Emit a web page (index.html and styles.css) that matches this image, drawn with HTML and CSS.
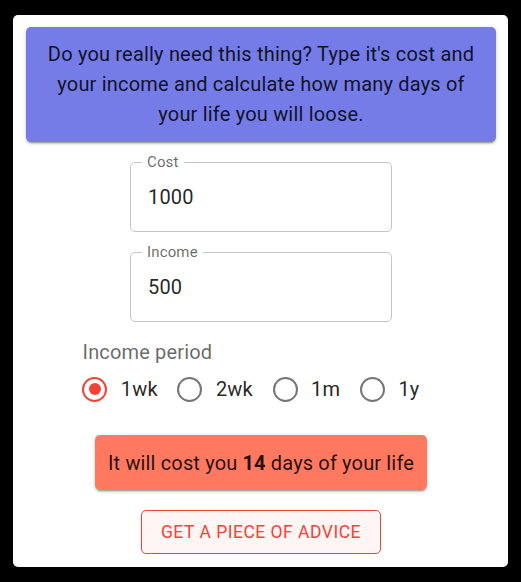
FILE: index.html
```html
<!DOCTYPE html>
<html lang="en">
<head>
<meta charset="utf-8">
<title>Days of life</title>
<link rel="stylesheet" href="styles.css">
</head>
<body>
<div class="card">
  <div class="banner">Do you really need this thing? Type it's cost and your income and calculate how many days of your life you will loose.</div>
  <fieldset class="field field-first">
    <legend class="field-label">Cost</legend>
    <input class="field-input" type="text" value="1000">
  </fieldset>
  <fieldset class="field field-second">
    <legend class="field-label">Income</legend>
    <input class="field-input" type="text" value="500">
  </fieldset>
  <div class="period">
    <div class="period-label">Income period</div>
    <div class="radios">
      <label class="option"><span class="radio-btn"><span class="radio radio-checked"><span class="radio-dot"></span></span></span><span class="option-text">1wk</span></label>
      <label class="option"><span class="radio-btn"><span class="radio"></span></span><span class="option-text">2wk</span></label>
      <label class="option"><span class="radio-btn"><span class="radio"></span></span><span class="option-text">1m</span></label>
      <label class="option"><span class="radio-btn"><span class="radio"></span></span><span class="option-text">1y</span></label>
    </div>
  </div>
  <div class="result">It will cost you <b>14</b> days of your life</div>
  <button class="advice" type="button">Get a piece of advice</button>
</div>
</body>
</html>
```
FILE: styles.css
```css
html, body {
  margin: 0;
  background: #000;
}
body {
  padding: 15px 13px 15px 13px;
  font-family: Roboto, "Noto Sans", Arial, sans-serif;
  color: rgba(0, 0, 0, 0.87);
  letter-spacing: 0.00938em;
}
.card {
  width: 495px;
  height: 552px;
  box-sizing: border-box;
  background: #fff;
  border-radius: 5px;
  padding: 12px 12px 13px 13px;
  display: flex;
  flex-direction: column;
  align-items: center;
}
.banner {
  align-self: stretch;
  background: #757ce8;
  border-radius: 5px;
  padding: 12px 12px 13px;
  font-size: 20px;
  line-height: 30px;
  letter-spacing: 0.00938em;
  text-align: center;
  color: rgba(0, 0, 0, 0.87);
  box-shadow: 0 3px 1px -2px rgba(0,0,0,0.2), 0 2px 2px 0 rgba(0,0,0,0.14), 0 1px 5px 0 rgba(0,0,0,0.12);
}
.field {
  width: 262px;
  box-sizing: border-box;
  margin: 0;
  padding: 0 11px 7px 11px;
  border: 1px solid #c4c4c4;
  border-radius: 5px;
  min-width: 0;
}
.field-first {
  margin-top: 13px;
}
.field-second {
  margin-top: 13px;
}
.field-label {
  padding: 0 5px;
  font-size: 15px;
  line-height: 15px;
  letter-spacing: 0.00938em;
  color: rgba(0, 0, 0, 0.6);
}
.field-input {
  display: block;
  width: 100%;
  box-sizing: border-box;
  height: 54px;
  border: 0;
  outline: 0;
  margin: 0;
  padding: 0 0 0 6px;
  background: transparent;
  font-family: Roboto, "Noto Sans", Arial, sans-serif;
  font-size: 20px;
  letter-spacing: 0.00938em;
  color: rgba(0, 0, 0, 0.87);
}
.period {
  margin-top: 18px;
  display: flex;
  flex-direction: column;
  align-items: flex-start;
}
.period-label {
  font-size: 20px;
  line-height: 24px;
  color: rgba(0, 0, 0, 0.6);
}
.radios {
  display: flex;
  flex-direction: row;
  margin-top: -1px;
}
.option {
  display: flex;
  align-items: center;
  margin-left: -13.75px;
  margin-right: 20px;
}
.radio-btn {
  padding: 11px;
  width: 30px;
  height: 30px;
  display: flex;
  align-items: center;
  justify-content: center;
}
.radio {
  width: 25px;
  height: 25px;
  box-sizing: border-box;
  border: 2.5px solid #757575;
  border-radius: 50%;
  display: flex;
  align-items: center;
  justify-content: center;
}
.radio-checked {
  border-color: #f44336;
}
.radio-dot {
  width: 12.5px;
  height: 12.5px;
  border-radius: 50%;
  background: #f44336;
}
.option-text {
  font-size: 20px;
  line-height: 30px;
  color: rgba(0, 0, 0, 0.87);
}
.result {
  margin-top: 20px;
  background: #ff7961;
  border-radius: 5px;
  padding: 12.5px 12.5px;
  font-size: 20px;
  line-height: 30px;
  color: rgba(0, 0, 0, 0.87);
  box-shadow: 0 3px 1px -2px rgba(0,0,0,0.2), 0 2px 2px 0 rgba(0,0,0,0.14), 0 1px 5px 0 rgba(0,0,0,0.12);
}
.result b {
  font-weight: 700;
}
.advice {
  margin-top: 20px;
  height: 45px;
  padding: 0 19px;
  border: 1px solid #f44336;
  border-radius: 5px;
  background: #fef5f5;
  color: #f44336;
  font-family: Roboto, "Noto Sans", Arial, sans-serif;
  font-size: 17.5px;
  font-weight: 400;
  letter-spacing: 0.5px;
  text-transform: uppercase;
}
```
